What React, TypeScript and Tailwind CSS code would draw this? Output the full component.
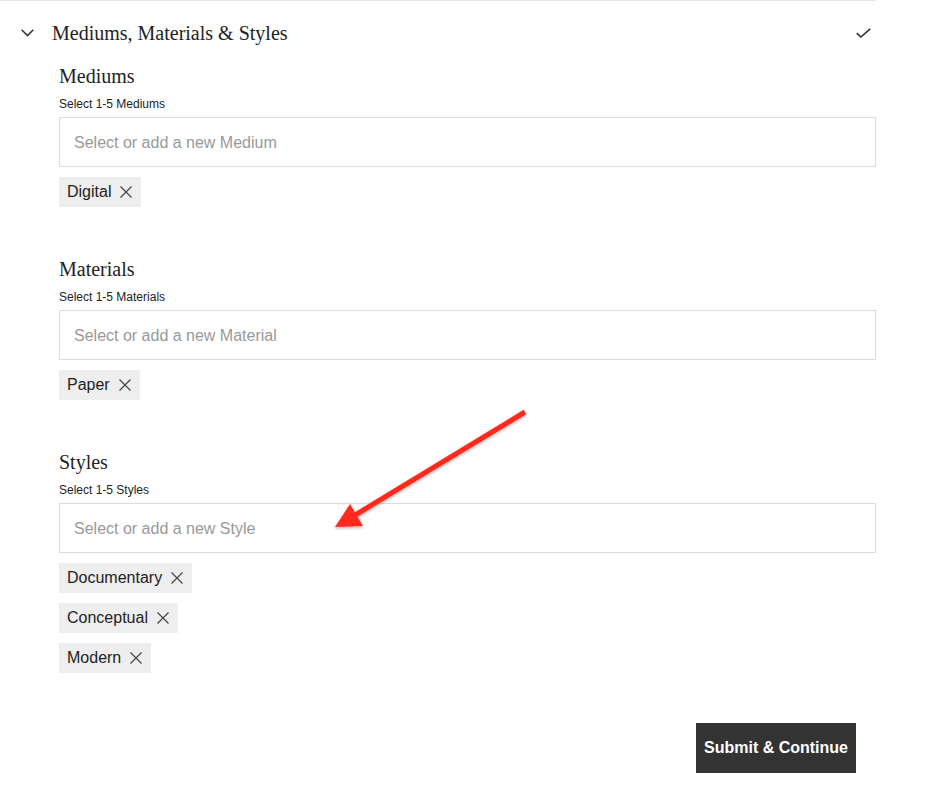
import React from "react";

const serif = { fontFamily: '"Liberation Serif", "Times New Roman", serif' };

function XIcon() {
  return (
    <svg width="12" height="12" viewBox="0 0 12 12" className="shrink-0">
      <path d="M0.5 0.5 L11.5 11.5 M11.5 0.5 L0.5 11.5" stroke="#444" strokeWidth="1.2" fill="none" />
    </svg>
  );
}

function Chip({ label }: { label: string }) {
  return (
    <div className="flex h-[30px] items-center gap-[9px] self-start bg-[#eeeeee] pl-[8px] pr-[9px] text-[16px] text-[#222]">
      <span>{label}</span>
      <XIcon />
    </div>
  );
}

function Section({ title, hint, placeholder, chips, last }: { title: string; hint: string; placeholder: string; chips: string[]; last?: boolean }) {
  return (
    <div className={last ? "flex flex-col" : "flex flex-col pb-[51px]"}>
      <div className="text-[20px] leading-[23px] text-[#222]" style={serif}>{title}</div>
      <div className="mt-[9px] text-[12px] leading-[14px] text-[#222]">{hint}</div>
      <div className="mt-[6px] flex h-[50px] items-center border border-[#dcdcdc] px-[14px] pt-[2px] text-[16px] text-[#999]">{placeholder}</div>
      <div className="mt-[10px] flex flex-col gap-[10px]">
        {chips.map((c) => (
          <Chip key={c} label={c} />
        ))}
      </div>
    </div>
  );
}

export default function App() {
  return (
    <div className="relative h-[807px] w-[944px] bg-white" style={{ fontFamily: '"Liberation Sans", Arial, sans-serif' }}>
      <div className="w-[876px] border-t border-[#e6e6e6]">
        <div className="flex h-[64px] items-center pl-[21px] pr-[5px]">
          <svg width="13" height="8" viewBox="0 0 13 8" className="shrink-0">
            <path d="M0.7 0.7 L6.5 6.6 L12.3 0.7" stroke="#333" strokeWidth="1.5" fill="none" />
          </svg>
          <div className="ml-[18px] flex-1 text-[20px] text-[#222]" style={serif}>Mediums, Materials &amp; Styles</div>
          <svg width="15" height="10" viewBox="0 0 15 10" className="shrink-0">
            <path d="M0.8 5.2 L4.8 9 L14.2 0.8" stroke="#333" strokeWidth="1.6" fill="none" />
          </svg>
        </div>
        <div className="pl-[59px]">
          <Section title="Mediums" hint="Select 1-5 Mediums" placeholder="Select or add a new Medium" chips={["Digital"]} />
          <Section title="Materials" hint="Select 1-5 Materials" placeholder="Select or add a new Material" chips={["Paper"]} />
          <Section title="Styles" hint="Select 1-5 Styles" placeholder="Select or add a new Style" chips={["Documentary", "Conceptual", "Modern"]} last />
          <div className="mt-[50px] flex justify-end pr-[20px]">
            <button className="flex h-[50px] w-[160px] items-center justify-center bg-[#333333] text-[16px] font-bold text-white">
              Submit &amp; Continue
            </button>
          </div>
        </div>
      </div>
      <svg className="pointer-events-none absolute left-0 top-0" width="944" height="807">
        <defs>
          <filter id="sh" x="-20%" y="-20%" width="140%" height="140%">
            <feDropShadow dx="0" dy="1.5" stdDeviation="1.5" floodColor="#000" floodOpacity="0.3" />
          </filter>
        </defs>
        <g filter="url(#sh)">
          <line x1="525" y1="412" x2="352" y2="517" stroke="#ff2a1f" strokeWidth="5" strokeLinecap="butt" />
          <polygon points="335,527 350,504 363,526" fill="#ff2a1f" />
        </g>
      </svg>
    </div>
  );
}
